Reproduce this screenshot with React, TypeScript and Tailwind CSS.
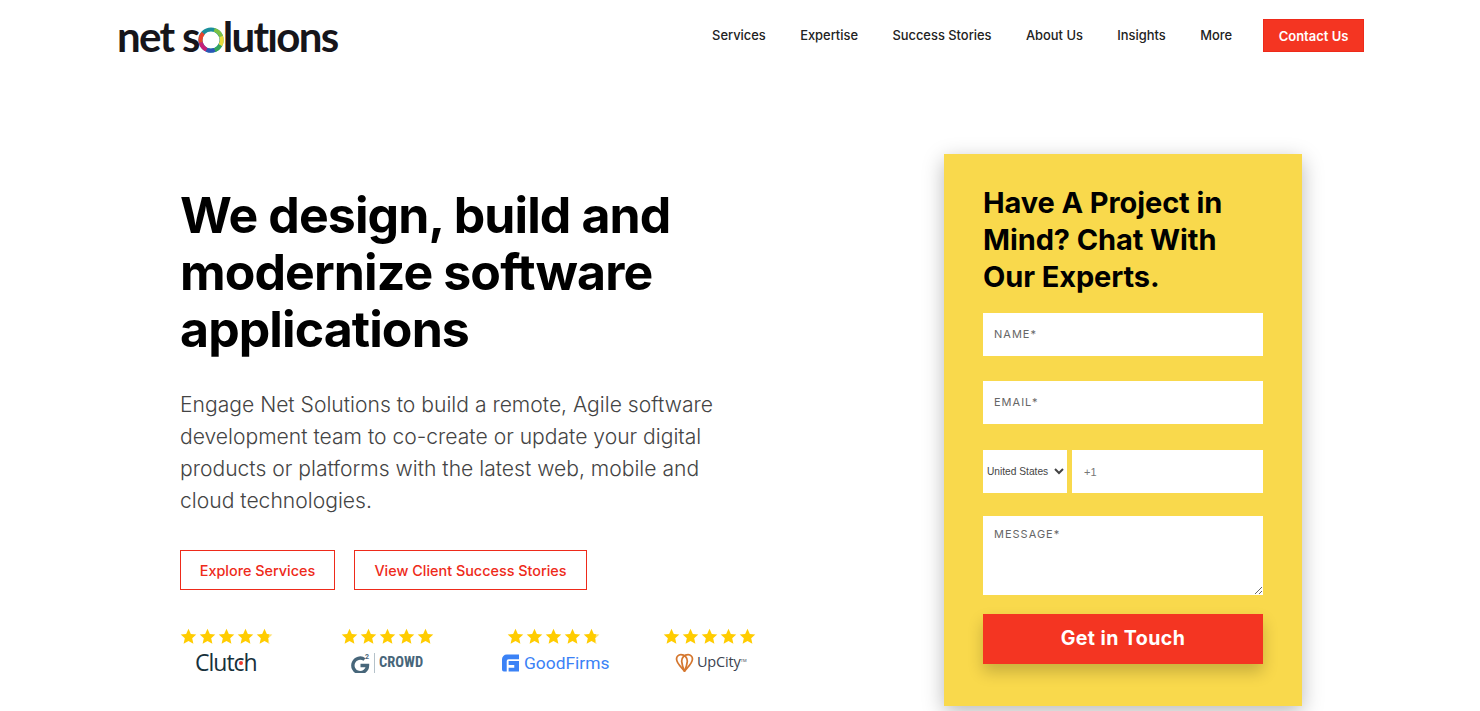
const navItems = ["Services", "Expertise", "Success Stories", "About Us", "Insights", "More"]

function Star({ partial = false }: { partial?: boolean }) {
  return (
    <svg viewBox="0 0 24 24" className="w-[17px] h-[17px]">
      <path d="M12 1l3.300 7.300 7.700.8-5.800 5.300 1.700 7.800L12 18.200 5.100 22.200l1.700-7.800L1 9.100l7.700-.8z" fill="#ffcc00" />
      {partial && <path d="M19 4l4 5-5.800 5.300 1.700 7.800-2-1.200z" fill="#ffffff" fillOpacity="0.45" />}
    </svg>
  )
}

function Stars({ partial = false }: { partial?: boolean }) {
  return (
    <div className="flex gap-[2px]">
      <Star />
      <Star />
      <Star />
      <Star />
      <Star partial={partial} />
    </div>
  )
}

function LogoRing() {
  return (
    <svg viewBox="0 0 32 32" className="w-[26px] h-[26px] mx-[-1px] mt-[7px]">
      <circle cx="16" cy="16" r="13" fill="none" stroke="#1a8f9c" strokeWidth="5" />
      <path d="M20 3.600a13 13 0 0 1 8.500 8" fill="none" stroke="#7cc142" strokeWidth="5" />
      <path d="M28.500 11.600a13 13 0 0 1-1 11" fill="none" stroke="#e8dc3a" strokeWidth="5" />
      <path d="M27.500 22.600a13 13 0 0 1-7 6" fill="none" stroke="#35a65a" strokeWidth="5" />
      <path d="M20.500 28.200a13 13 0 0 1-10 0" fill="none" stroke="#2a55b8" strokeWidth="5" />
      <path d="M10.500 28a13 13 0 0 1-7-9" fill="none" stroke="#c81e78" strokeWidth="5" />
      <path d="M3.400 19a13 13 0 0 1 3-11.500" fill="none" stroke="#e8452c" strokeWidth="5" />
    </svg>
  )
}

export default function App() {
  return (
    <div className="w-full h-[711px] overflow-hidden bg-white font-['Inter',sans-serif] text-black">
      {/* Header */}
      <header className="h-[71px] flex items-center justify-between pl-[117px] pr-[116px]">
        <div className="flex items-center h-[40px] mt-[1px] font-['Lato',sans-serif] font-bold text-[42px] leading-none tracking-[-1.7px] text-[#16151a]">
          <span className="whitespace-pre">net s</span>
          <LogoRing />
          <span>lutıons</span>
        </div>
        <nav className="flex items-center text-[12.9px] font-medium text-[#222]">
          <div className="flex gap-[34.4px] mr-[31px] mt-[1px]">
            {navItems.map((item) => (
              <a key={item}>{item}</a>
            ))}
          </div>
          <a className="w-[101px] h-[33px] pt-[2px] flex items-center justify-center bg-[#f43522] border border-[#ee2a1a] text-[13px] text-white font-semibold">
            Contact Us
          </a>
        </nav>
      </header>

      <main className="flex pl-[180px] pt-[83px]">
        {/* Left column */}
        <section className="w-[764px] pt-[33px]">
          <h1 className="text-[50px] leading-[57px] font-bold tracking-[-0.9px]">
            We design, build and
            <br />
            modernize software
            <br />
            applications
          </h1>
          <p className="mt-[31px] text-[21.1px] leading-[32px] font-light text-[#444]">
            Engage Net Solutions to build a remote, Agile software
            <br />
            development team to co-create or update your digital
            <br />
            products or platforms with the latest web, mobile and
            <br />
            cloud technologies.
          </p>
          <div className="flex gap-[19px] mt-[33px] text-[14.4px] font-medium text-[#ee2a1a]">
            <a className="w-[155px] h-[40px] pt-[1px] flex items-center justify-center border border-[#ee2a1a]">Explore Services</a>
            <a className="w-[233px] h-[40px] pt-[1px] flex items-center justify-center border border-[#ee2a1a]">View Client Success Stories</a>
          </div>
          <div className="flex mt-[38px]">
            <div className="w-[161px] flex flex-col">
              <Stars partial />
              <div className="relative ml-[15px] mt-[5px] h-[24px] text-[23px] leading-[24px] font-medium font-['Open_Sans',sans-serif] tracking-[-1px] text-[#17313b]">
                Clutch
                <span className="absolute left-[44px] top-[11px] w-[4px] h-[4px] rounded-full bg-[#ef3b2d]" />
              </div>
            </div>
            <div className="w-[166px] flex flex-col">
              <Stars />
              <div className="flex items-center ml-[10px] mt-[6px] h-[24px]">
                <svg viewBox="0 0 22 20" className="w-[22px] h-[20px]">
                  <path d="M13.500 6.500A7.300 7.300 0 1 0 16.500 12.500H9.500" fill="none" stroke="#47667a" strokeWidth="3.400" />
                  <text x="14" y="6" fontSize="7" fontWeight="700" fill="#47667a" fontFamily="Roboto, sans-serif">2</text>
                </svg>
                <span className="w-px h-[20px] ml-[1px] mr-[4px] bg-[#b5c2ca]" />
                <span className="font-['Liberation_Sans_Narrow','Roboto_Condensed',sans-serif] font-bold text-[14.5px] text-[#47667a]">CROWD</span>
              </div>
            </div>
            <div className="w-[156px] flex flex-col">
              <Stars partial />
              <div className="flex items-center mt-[6px] ml-[-6px] h-[24px]">
                <svg viewBox="0 0 18 18" className="w-[17px] h-[18px] ml-[1px]">
                  <path d="M0 5a5 5 0 0 1 5-5h13v5H7a2 2 0 0 0-2 2v11H2a2 2 0 0 1-2-2z" fill="#3b82f6" />
                  <path d="M7 7h11v11H7v-4h6v-3H7z" fill="#3b82f6" />
                </svg>
                <span className="ml-[5px] text-[17.4px] font-['Roboto',sans-serif] text-[#3b82f6]">GoodFirms</span>
              </div>
            </div>
            <div className="flex flex-col">
              <Stars />
              <div className="flex items-center ml-[12px] mt-[5px] h-[24px]">
                <svg viewBox="0 0 24 24" className="w-[19px] h-[19px]">
                  <path d="M12 23C8 18 2 13 2 8A5.500 5.500 0 0 1 7.500 2C12 2 16 6 15.500 11C15 16 13.500 20 12 23Z" fill="none" stroke="#d5772f" strokeWidth="2.200" strokeLinejoin="round" />
                  <path d="M12 23C16 18 22 13 22 8A5.500 5.500 0 0 0 16.500 2C12 2 8 6 8.500 11C9 16 10.500 20 12 23Z" fill="none" stroke="#d5772f" strokeWidth="2.200" strokeLinejoin="round" />
                </svg>
                <span className="ml-[3px] text-[14.5px] font-['Open_Sans',sans-serif] tracking-[-0.2px] text-[#3c4350]">UpCity</span>
                <span className="text-[4px] text-[#3c4350] mb-[3px]">TM</span>
              </div>
            </div>
          </div>
        </section>

        {/* Contact form */}
        <aside className="w-[358px] h-[552px] shrink-0 bg-[#f9d94c] px-[39px] pt-[30px] shadow-[0_6px_20px_rgba(0,0,0,0.28)]">
          <h2 className="text-[29px] leading-[37px] font-bold tracking-[-0.1px]">
            Have A Project in
            <br />
            Mind? Chat With
            <br />
            Our Experts.
          </h2>
          <form className="mt-[18px] flex flex-col">
            <input
              placeholder="NAME*"
              className="h-[43px] px-[11px] pb-[2px] bg-white text-[11px] tracking-[1px] placeholder:text-[#666] outline-none"
            />
            <input
              placeholder="EMAIL*"
              className="h-[43px] mt-[25px] px-[11px] pb-[2px] bg-white text-[11px] tracking-[1px] placeholder:text-[#666] outline-none"
            />
            <div className="flex gap-[5px] mt-[26px]">
              <select className="w-[84px] h-[43px] bg-white text-[10.2px] font-['Liberation_Sans',sans-serif] text-[#444] outline-none" defaultValue="United States">
                <option>United States</option>
              </select>
              <input
                placeholder="+1"
                className="flex-1 min-w-0 h-[43px] px-[12px] bg-white text-[11px] font-['Liberation_Sans',sans-serif] placeholder:text-[#777] outline-none"
              />
            </div>
            <textarea
              placeholder="MESSAGE*"
              className="block h-[79px] mt-[23px] px-[11px] py-[11px] bg-white text-[11px] leading-[14px] tracking-[1px] placeholder:text-[#666] outline-none"
            />
            <button
              type="button"
              className="h-[50px] mt-[19px] bg-[#f43522] text-white text-[19.6px] font-bold tracking-[0.4px] shadow-[0_8px_16px_rgba(0,0,0,0.2)]"
            >
              Get in Touch
            </button>
          </form>
        </aside>
      </main>
    </div>
  )
}
